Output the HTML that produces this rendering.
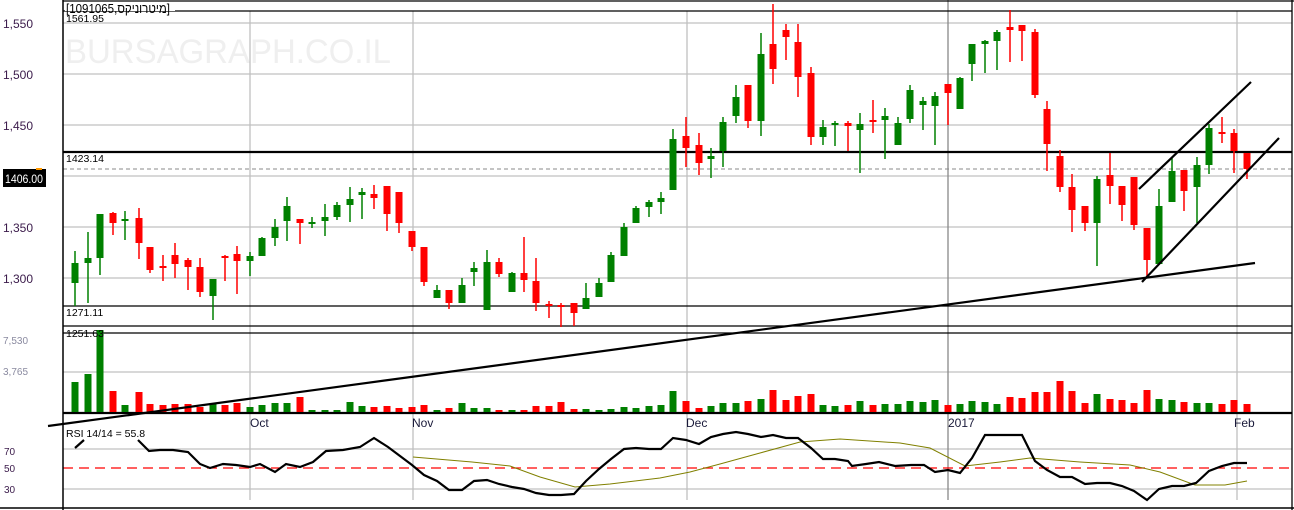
<!DOCTYPE html>
<html><head><meta charset="utf-8"><style>
html,body{margin:0;padding:0;background:#fff;width:1294px;height:510px;overflow:hidden}
svg{display:block}
text{font-family:"Liberation Sans","Noto Sans CJK SC",sans-serif}
</style></head><body>
<svg id="s" width="1294" height="510" viewBox="0 0 1294 510" xmlns="http://www.w3.org/2000/svg">
<rect width="1294" height="510" fill="#fff"/>
<text x="65" y="63" font-size="34" fill="#efefef" textLength="326" lengthAdjust="spacingAndGlyphs">BURSAGRAPH.CO.IL</text>
<g stroke="#c0c0c0" stroke-width="1.3">
<line x1="63" y1="23" x2="1292" y2="23"/><line x1="63" y1="74" x2="1292" y2="74"/>
<line x1="63" y1="125" x2="1292" y2="125"/><line x1="63" y1="176" x2="1292" y2="176"/>
<line x1="63" y1="227" x2="1292" y2="227"/><line x1="63" y1="278" x2="1292" y2="278"/>
<line x1="63" y1="372" x2="1292" y2="372"/>
<line x1="63" y1="449" x2="1292" y2="449"/><line x1="63" y1="489" x2="1292" y2="489"/>
<line x1="250" y1="11" x2="250" y2="500"/><line x1="413" y1="11" x2="413" y2="500"/>
<line x1="687" y1="11" x2="687" y2="500"/><line x1="1237" y1="11" x2="1237" y2="500"/>
</g>
<line x1="948" y1="0" x2="948" y2="500" stroke="#888" stroke-width="1.3"/>
<line x1="63" y1="169" x2="1292" y2="169" stroke="#888" stroke-dasharray="4,3"/>
<line x1="63" y1="468" x2="1292" y2="468" stroke="#f00" stroke-width="1.3" stroke-dasharray="10,6"/>
<g stroke="#000">
<line x1="63" y1="1" x2="1294" y2="1" stroke-width="1.3"/>
<line x1="63" y1="11" x2="1292" y2="11" stroke-width="1.3"/>
<line x1="63" y1="0" x2="63" y2="510" stroke-width="1.5"/>
<line x1="1292" y1="0" x2="1292" y2="510" stroke-width="1.3"/>
<line x1="63" y1="152" x2="1292" y2="152" stroke-width="2.2"/>
<line x1="63" y1="306" x2="1292" y2="306" stroke-width="1.3"/>
<line x1="63" y1="326" x2="1292" y2="326" stroke-width="1.3"/>
<line x1="63" y1="333" x2="1292" y2="333" stroke-width="1.3"/>
<line x1="63" y1="413" x2="1292" y2="413" stroke-width="2.2"/>
<line x1="0" y1="508" x2="1294" y2="508" stroke-width="1.5"/>
</g>
<g id="c"></g>
<g stroke="#000" stroke-width="2.2" fill="none">
<line x1="48" y1="426" x2="1255" y2="263"/>
<line x1="1139" y1="189" x2="1251" y2="82"/>
<line x1="1142" y1="282" x2="1279" y2="138"/>
<line x1="75" y1="448" x2="84" y2="440"/>
</g>
<polyline fill="none" stroke="#808000" stroke-width="1" points="413,457 472,462 510,466 540,477 575,487 610,484 660,478 690,472 720,464 760,453 800,442 840,439 900,443 930,448 965,466 1000,462 1030,458 1080,462 1130,465 1160,472 1195,485 1225,485 1247,481"/>
<polyline fill="none" stroke="#000" stroke-width="2.2" points="138,440 149,451 160,450 173,450 188,452 200,464 210,468 223,464 236,465 250,467 260,464 275,472 286,464 300,467 313,462 326,451 343,450 360,447 374,438 388,447 400,456 412,465 424,475 437,481 449,490 462,490 474,481 487,480 499,484 512,487 524,489 536,493 549,495 561,495 574,494 586,481 599,469 611,459 624,449 636,448 649,449 661,449 673,438 686,440 699,444 711,437 723,434 736,432 748,434 761,437 773,435 786,438 798,438 811,448 823,459 835,459 848,461 852,466 866,464 879,462 895,466 911,465 924,465 935,472 948,470 960,473 972,458 985,435 997,435 1010,435 1022,435 1035,461 1047,470 1060,477 1072,477 1085,484 1097,483 1110,483 1122,486 1134,491 1147,500 1159,489 1172,486 1184,486 1196,483 1209,471 1222,466 1234,463 1247,463"/>
<rect x="65" y="2" width="110" height="9" fill="#fff"/>
<text x="66" y="13" font-size="13" fill="#000" textLength="104" lengthAdjust="spacingAndGlyphs">[מיטרוניקס,1091065]</text>
<text x="66" y="22" font-size="10.5" fill="#000">1561.95</text>
<text x="66" y="162" font-size="10.5" fill="#000">1423.14</text>
<text x="66" y="316" font-size="10.5" fill="#000">1271.11</text>
<text x="66" y="337" font-size="10.5" fill="#000">1251.63</text>
<g font-size="12" fill="#3a1a4a">
<text x="3" y="28">1,550</text><text x="3" y="79">1,500</text>
<text x="3" y="130">1,450</text><text x="3" y="232">1,350</text><text x="3" y="283">1,300</text>
</g>
<g font-size="10" fill="#8a8aa0"><text x="3" y="344">7,530</text><text x="3" y="375">3,765</text></g>
<g font-size="10" fill="#3a1a4a"><text x="4" y="455">70</text><text x="4" y="472">50</text><text x="4" y="493">30</text></g>
<rect x="3" y="169" width="43" height="18" fill="#000"/>
<rect x="36" y="168" width="6" height="2" fill="#f90"/>
<text x="5" y="183" font-size="12" fill="#fff" textLength="38" lengthAdjust="spacingAndGlyphs">1406.00</text>
<g font-size="12" fill="#1a1a3a">
<text x="250" y="427">Oct</text><text x="412" y="427">Nov</text><text x="686" y="427">Dec</text>
<text x="948" y="427">2017</text><text x="1234" y="427">Feb</text>
</g>
<text x="66" y="437" font-size="10.5" fill="#000">RSI 14/14 = 55.8</text>
</svg>
<script>
var d=[[75,263,283,251,306,'g',382],[88,258,263,232,303,'g',374],[100,214,258,214,275,'g',330],[113,213,223,212,235,'r',391],[125,219,219,211,240,'g',405],[139,218,243,208,259,'r',392],[150,247,270,247,273,'r',404],[163,266,266,255,281,'r',405],[175,255,264,243,278,'r',404],[188,260,267,258,290,'r',404],[200,267,292,258,297,'r',407],[213,279,296,279,320,'g',403],[225,256,258,255,281,'r',405],[237,254,261,246,294,'r',403],[250,256,261,252,276,'g',407],[262,238,256,237,256,'g',405],[275,227,238,219,246,'g',403],[287,206,221,197,241,'g',403],[300,219,223,219,244,'r',397],[312,222,222,217,228,'g',410],[325,217,221,204,236,'g',410],[337,205,217,202,220,'g',410],[350,199,205,187,222,'g',402],[362,192,195,188,219,'g',406],[374,194,198,185,209,'r',407],[387,186,214,186,231,'r',406],[399,192,223,192,233,'r',408],[412,231,247,231,251,'r',407],[424,247,282,247,286,'r',405],[437,290,298,285,298,'g',410],[449,290,303,290,309,'r',408],[462,285,303,278,303,'g',403],[474,268,272,262,286,'g',408],[487,262,310,250,310,'g',408],[499,262,274,258,277,'r',410],[512,273,292,272,292,'g',410],[524,273,280,237,292,'r',410],[536,281,303,258,311,'r',406],[549,304,304,301,318,'r',406],[561,305,305,303,327,'r',402],[574,303,313,303,326,'r',409],[586,298,309,283,309,'g',409],[599,283,297,278,297,'g',410],[611,255,282,252,282,'g',409],[624,227,256,223,256,'g',407],[636,208,223,206,223,'g',408],[649,202,207,200,217,'g',406],[661,198,202,192,214,'g',405],[673,139,190,129,190,'g',391],[686,136,148,117,167,'r',401],[699,145,163,133,175,'r',408],[711,156,159,148,178,'g',406],[723,122,151,117,167,'g',403],[736,97,116,85,123,'g',403],[748,85,121,85,128,'r',401],[761,54,121,33,136,'g',399],[773,44,69,4,84,'r',390],[786,30,37,24,60,'r',400],[798,42,77,24,97,'r',396],[811,73,137,67,145,'r',394],[823,127,137,120,145,'g',405],[835,123,125,121,146,'g',406],[848,123,126,121,151,'r',405],[860,124,130,113,173,'g',401],[873,120,120,100,133,'r',405],[885,116,120,108,159,'g',404],[898,123,145,117,145,'g',404],[910,90,119,85,123,'g',401],[923,101,105,97,130,'g',402],[935,96,106,92,145,'g',400],[948,84,93,84,125,'r',405],[960,78,109,77,109,'g',404],[972,44,64,44,81,'g',401],[985,41,44,40,73,'g',402],[997,32,41,30,70,'g',404],[1010,27,30,10,62,'r',397],[1022,25,31,25,61,'r',398],[1035,32,95,29,98,'r',392],[1047,109,144,101,171,'r',392],[1060,156,187,150,192,'r',381],[1072,187,210,174,232,'r',391],[1085,206,223,206,231,'r',403],[1097,179,223,176,266,'g',394],[1110,175,186,153,204,'r',399],[1122,186,205,186,221,'r',400],[1134,177,225,177,230,'r',403],[1147,228,260,228,277,'r',390],[1159,206,264,189,264,'g',399],[1172,171,202,157,202,'g',400],[1184,170,191,170,211,'r',402],[1197,165,187,157,223,'g',403],[1209,128,165,124,174,'g',403],[1222,132,132,117,143,'r',404],[1234,133,151,129,173,'r',400],[1247,153,169,153,179,'r',404]];
var h='';d.forEach(function(c){var col=c[5]=='g'?'#008000':'#ff0000';var bh=Math.max(c[2]-c[1],2);
h+='<line x1="'+c[0]+'" y1="'+c[3]+'" x2="'+c[0]+'" y2="'+c[4]+'" stroke="'+col+'" stroke-width="1.5"/>';
h+='<rect x="'+(c[0]-3.5)+'" y="'+c[1]+'" width="7" height="'+bh+'" fill="'+col+'"/>';
h+='<rect x="'+(c[0]-3.5)+'" y="'+c[6]+'" width="7" height="'+(412-c[6])+'" fill="'+col+'"/>';});
document.getElementById('c').innerHTML=h;
</script>
</body></html>
